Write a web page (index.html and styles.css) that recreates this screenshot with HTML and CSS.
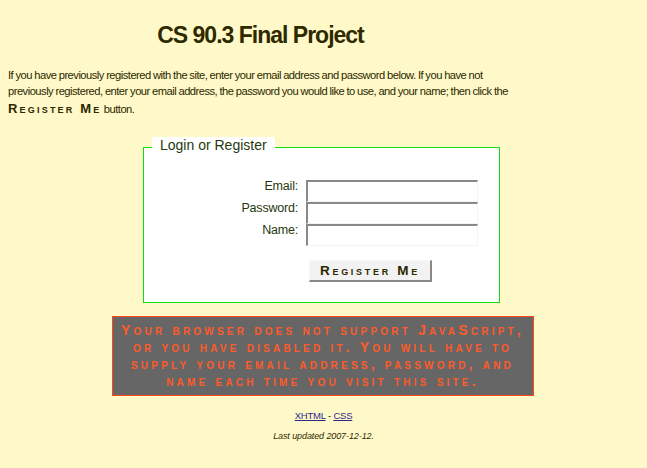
FILE: index.html
```html
<!DOCTYPE html>
<html lang="en">
<head>
<meta charset="utf-8">
<title>CS 90.3 Final Project</title>
<link rel="stylesheet" href="styles.css">
</head>
<body>
<div class="header">
  <h1 class="title">CS 90.3 Final Project</h1>
  <p class="intro">If you have previously registered with the site, enter your email address and password below. If you have not previously registered, enter your email address, the password you would like to use, and your name; then click the <span class="btn-name">Register Me</span> button.</p>
</div>
<form class="login">
  <fieldset class="box">
    <legend class="legend">Login or Register</legend>
    <div class="fields">
      <label class="lbl" for="email">Email:</label>
      <input class="inp" id="email" type="text">
      <label class="lbl" for="pw">Password:</label>
      <input class="inp" id="pw" type="password">
      <label class="lbl" for="name">Name:</label>
      <input class="inp" id="name" type="text">
      <span></span>
      <div class="btn-row"><button class="btn" type="button">Register Me</button></div>
    </div>
  </fieldset>
</form>
<div class="warn">Your browser does not support JavaScript, or you have disabled it. You will have to supply your email address, password, and name each time you visit this site.</div>
<p class="links"><a href="#">XHTML</a> - <a href="#">CSS</a></p>
<p class="updated">Last updated 2007-12-12.</p>
</body>
</html>
```
FILE: styles.css
```css
html { background: #fff8c8; }
body {
  margin: 8px;
  font-family: "Liberation Sans", Arial, sans-serif;
  color: #2b2900;
}
.header { width: 505px; }
.title {
  font-size: 23px;
  font-weight: bold;
  letter-spacing: -1px;
  text-align: center;
  margin: 13px 0 0;
  line-height: 29px;
  color: #2e2a00;
}
.intro {
  font-size: 11.2px;
  letter-spacing: -0.52px;
  word-spacing: -0.3px;
  line-height: 15.5px;
  margin: 18px 0 0;
}
.btn-name {
  font-variant: small-caps;
  font-weight: bold;
  letter-spacing: 2.2px;
  word-spacing: 0;
  font-size: 13px;
  line-height: 20px;
}
.login { margin: 18px 0 0; }
.box {
  box-sizing: border-box;
  width: 357px;
  margin: 0 auto;
  padding: 0 0 20px;
  border: 1px solid #11dd11;
  background: #ffffff;
  position: relative;
  left: -2px;
}
.legend {
  margin-left: 8px;
  padding: 0 8px 4px;
  background: #ffffff;
  font-size: 14px;
  color: #1f3a0d;
}
.fields {
  display: grid;
  grid-template-columns: 154px 172px;
  column-gap: 8px;
  margin-top: 23px;
  align-items: start;
}
.lbl {
  text-align: right;
  font-size: 12.5px;
  letter-spacing: -0.2px;
  line-height: 13px;
  color: #1f3a0d;
}
.inp {
  box-sizing: border-box;
  width: 172px;
  height: 22px;
  margin: 0;
  padding: 0;
  border-style: solid;
  border-width: 2px 1px 1px 2px;
  border-color: #888888 #f4f4f4 #f4f4f4 #888888;
  background: #ffffff;
}
.btn-row { padding: 14px 0 0 3px; }
.btn {
  box-sizing: border-box;
  width: 123px;
  height: 22px;
  padding: 0;
  background: #f2f2f2;
  border-style: solid;
  border-width: 1px 2px 2px 1px;
  border-color: #f8f8f8 #888888 #888888 #f8f8f8;
  font-family: "Liberation Sans", sans-serif;
  font-variant: small-caps;
  font-weight: bold;
  font-size: 13.5px;
  letter-spacing: 2.7px;
  color: #2b2900;
}
.warn {
  box-sizing: border-box;
  width: 422px;
  margin: 13px auto 0;
  position: relative;
  left: -1px;
  padding: 5px 2px 5px;
  background: #666666;
  border: 1px solid #ff4a14;
  color: #ff5a2a;
  text-align: center;
  font-variant: small-caps;
  font-weight: bold;
  font-size: 14px;
  line-height: 17px;
  letter-spacing: 3.2px;
}
.links {
  text-align: center;
  font-size: 9.5px;
  letter-spacing: -0.2px;
  margin: 14px 0 0;
}
.links a { color: #2e2a8a; }
.updated {
  text-align: center;
  font-size: 9px;
  letter-spacing: -0.1px;
  font-style: italic;
  margin: 10px 0 0;
}
```
